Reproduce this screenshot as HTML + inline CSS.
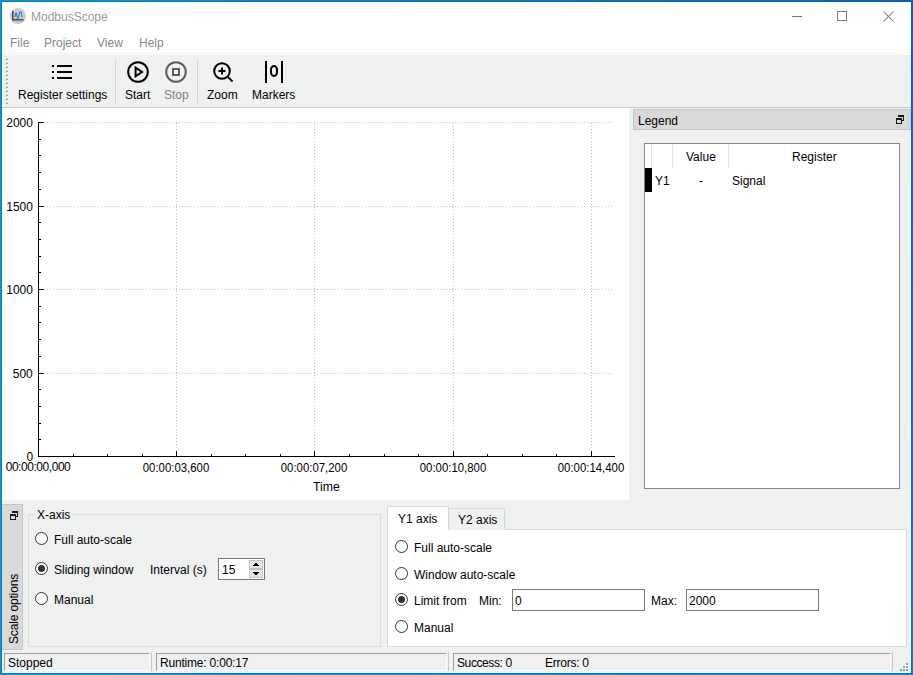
<!DOCTYPE html>
<html><head><meta charset="utf-8">
<style>
*{box-sizing:border-box;margin:0;padding:0}
html,body{width:913px;height:675px;overflow:hidden;background:#eff0f0}
body{position:relative;font-family:"Liberation Sans",sans-serif;font-size:12px;color:#000}
.a{position:absolute}
.t{position:absolute;white-space:nowrap;line-height:14px;height:14px}
.radio{width:13px;height:13px;border-radius:50%;border:1px solid #333;background:#fff}
.radio.on::after{content:"";position:absolute;left:2px;top:2px;width:7px;height:7px;border-radius:50%;background:#333}
.sunk{border-top:1px solid #a0a0a0;border-left:1px solid #a0a0a0;border-right:1px solid #fff;border-bottom:1px solid #fff}
</style></head><body>
<!-- window frame -->
<div class="a" style="left:0;top:0;width:913px;height:2px;background:linear-gradient(to right,#0099e0,#0080d0 50%,#0066c0)"></div>
<div class="a" style="left:1px;top:1px;width:911px;height:1px;background:linear-gradient(to right,#1a75ad,#1868a8 50%,#1a5a9a)"></div>
<div class="a" style="left:0;top:673px;width:913px;height:2px;background:linear-gradient(to right,#0099e0,#0a80d0)"></div>
<div class="a" style="left:1px;top:673px;width:911px;height:1px;background:linear-gradient(to right,#1a75ad,#1a6fa8)"></div>
<div class="a" style="left:0;top:0;width:2px;height:675px;background:#0099e0"></div>
<div class="a" style="left:1px;top:1px;width:1px;height:673px;background:#1a75ad"></div>
<div class="a" style="left:911px;top:0;width:2px;height:675px;background:linear-gradient(to bottom,#0066c0,#0075cc 50%,#0a80d0)"></div>
<div class="a" style="left:911px;top:1px;width:1px;height:673px;background:linear-gradient(to bottom,#1a5a9a,#1468aa 50%,#1a6fa8)"></div>
<div class="a" id="client" style="left:2px;top:2px;width:909px;height:671px;background:#eff0f0;overflow:hidden">
</div>

<!-- title bar -->
<div class="a" style="left:2px;top:2px;width:909px;height:30px;background:#fff"></div>
<!-- app icon -->
<svg class="a" style="left:10px;top:8px" width="16" height="16" viewBox="0 0 16 16">
  <circle cx="8" cy="8" r="8" fill="#cfcbc9"/>
  <path d="M2.8 3 V11.8 H13.5" fill="none" stroke="#4a4a4a" stroke-width="1.5"/>
  <path d="M3.5 12.8 H13.5" stroke="#9a9a9a" stroke-width="1"/>
  <path d="M5 9 C5.5 4 6.5 4 7 8 C7.5 11 8.5 11 9 7 C9.5 3 11 3 11.5 6 L12 9" fill="none" stroke="#1a7fd4" stroke-width="1.1"/>
</svg>
<div class="t" style="left:31px;top:10px;color:#999">ModbusScope</div>
<!-- window buttons -->
<div class="a" style="left:792px;top:16px;width:10px;height:1px;background:#777"></div>
<div class="a" style="left:837px;top:11px;width:10px;height:10px;border:1px solid #777"></div>
<svg class="a" style="left:883px;top:11px" width="11" height="11" viewBox="0 0 11 11"><path d="M0.5 0.5 L10.5 10.5 M10.5 0.5 L0.5 10.5" stroke="#777" stroke-width="1.05"/></svg>

<!-- menu bar -->
<div class="a" style="left:2px;top:32px;width:909px;height:21px;background:#fff"></div>
<div class="t" style="left:10px;top:36px;color:#888">File</div>
<div class="t" style="left:44px;top:36px;color:#888">Project</div>
<div class="t" style="left:97px;top:36px;color:#888">View</div>
<div class="t" style="left:139px;top:36px;color:#888">Help</div>
<div class="a" style="left:2px;top:53px;width:909px;height:1px;background:#f2f2f2"></div>
<div class="a" style="left:2px;top:54px;width:909px;height:1px;background:#fff"></div>

<!-- toolbar -->
<div class="a" style="left:2px;top:55px;width:909px;height:52px;background:#eff0f0"></div>
<div class="a" style="left:2px;top:107px;width:909px;height:1px;background:#c9c9c9"></div>

<!-- toolbar handle -->
<svg class="a" style="left:6px;top:58px" width="2" height="46" shape-rendering="crispEdges"><rect x="1" y="0" width="1" height="1" fill="#c4c4c4"/><rect x="0" y="1" width="1" height="1" fill="#8c8c8c"/><rect x="1" y="1" width="1" height="1" fill="#b0b0b0"/><rect x="1" y="4" width="1" height="1" fill="#c4c4c4"/><rect x="0" y="5" width="1" height="1" fill="#8c8c8c"/><rect x="1" y="5" width="1" height="1" fill="#b0b0b0"/><rect x="1" y="8" width="1" height="1" fill="#c4c4c4"/><rect x="0" y="9" width="1" height="1" fill="#8c8c8c"/><rect x="1" y="9" width="1" height="1" fill="#b0b0b0"/><rect x="1" y="12" width="1" height="1" fill="#c4c4c4"/><rect x="0" y="13" width="1" height="1" fill="#8c8c8c"/><rect x="1" y="13" width="1" height="1" fill="#b0b0b0"/><rect x="1" y="16" width="1" height="1" fill="#c4c4c4"/><rect x="0" y="17" width="1" height="1" fill="#8c8c8c"/><rect x="1" y="17" width="1" height="1" fill="#b0b0b0"/><rect x="1" y="20" width="1" height="1" fill="#c4c4c4"/><rect x="0" y="21" width="1" height="1" fill="#8c8c8c"/><rect x="1" y="21" width="1" height="1" fill="#b0b0b0"/><rect x="1" y="24" width="1" height="1" fill="#c4c4c4"/><rect x="0" y="25" width="1" height="1" fill="#8c8c8c"/><rect x="1" y="25" width="1" height="1" fill="#b0b0b0"/><rect x="1" y="28" width="1" height="1" fill="#c4c4c4"/><rect x="0" y="29" width="1" height="1" fill="#8c8c8c"/><rect x="1" y="29" width="1" height="1" fill="#b0b0b0"/><rect x="1" y="32" width="1" height="1" fill="#c4c4c4"/><rect x="0" y="33" width="1" height="1" fill="#8c8c8c"/><rect x="1" y="33" width="1" height="1" fill="#b0b0b0"/><rect x="1" y="36" width="1" height="1" fill="#c4c4c4"/><rect x="0" y="37" width="1" height="1" fill="#8c8c8c"/><rect x="1" y="37" width="1" height="1" fill="#b0b0b0"/><rect x="1" y="40" width="1" height="1" fill="#c4c4c4"/><rect x="0" y="41" width="1" height="1" fill="#8c8c8c"/><rect x="1" y="41" width="1" height="1" fill="#b0b0b0"/><rect x="1" y="44" width="1" height="1" fill="#c4c4c4"/><rect x="0" y="45" width="1" height="1" fill="#8c8c8c"/><rect x="1" y="45" width="1" height="1" fill="#b0b0b0"/></svg>
<!-- register settings icon -->
<div class="a" style="left:52px;top:65px;width:2px;height:2px;background:#000"></div>
<div class="a" style="left:52px;top:71px;width:2px;height:2px;background:#000"></div>
<div class="a" style="left:52px;top:77px;width:2px;height:2px;background:#000"></div>
<div class="a" style="left:57px;top:65px;width:15px;height:2px;background:#000"></div>
<div class="a" style="left:57px;top:71px;width:15px;height:2px;background:#000"></div>
<div class="a" style="left:57px;top:77px;width:15px;height:2px;background:#000"></div>
<div class="t" style="left:18px;top:88px">Register settings</div>
<div class="a" style="left:115px;top:59px;width:1px;height:44px;background:#d4d4d4"></div>
<!-- start -->
<svg class="a" style="left:126px;top:60px" width="24" height="24" viewBox="0 0 24 24">
 <circle cx="12" cy="12" r="9.8" fill="none" stroke="#000" stroke-width="2"/>
 <path d="M9.6 7.6 L16 12 L9.6 16.4 Z" fill="none" stroke="#000" stroke-width="2" stroke-linejoin="miter"/>
</svg>
<div class="t" style="left:125px;top:88px">Start</div>
<!-- stop -->
<svg class="a" style="left:164px;top:60px" width="24" height="24" viewBox="0 0 24 24">
 <circle cx="12" cy="12" r="9.8" fill="none" stroke="#5f5f5f" stroke-width="2"/>
 <rect x="9" y="9" width="6" height="6" fill="none" stroke="#5f5f5f" stroke-width="2"/>
</svg>
<div class="t" style="left:164px;top:88px;color:#838383">Stop</div>
<div class="a" style="left:197px;top:59px;width:1px;height:44px;background:#d4d4d4"></div>
<!-- zoom -->
<svg class="a" style="left:210px;top:59px" width="26" height="26" viewBox="0 0 26 26">
 <circle cx="12" cy="12" r="7.8" fill="none" stroke="#000" stroke-width="2"/>
 <path d="M17.6 17.6 L22.5 22.5" stroke="#000" stroke-width="2"/>
 <path d="M8.5 12 H15.5 M12 8.5 V15.5" stroke="#000" stroke-width="2"/>
</svg>
<div class="t" style="left:207px;top:88px">Zoom</div>
<!-- markers -->
<div class="a" style="left:265px;top:61px;width:2px;height:22px;background:#000"></div>
<div class="a" style="left:281px;top:61px;width:2px;height:22px;background:#000"></div>
<div class="a" style="left:270px;top:65px;width:8px;height:12px;border:2px solid #000;border-radius:4px/5px"></div>
<div class="t" style="left:252px;top:88px">Markers</div>
<!-- plot -->
<div class="a" style="left:2px;top:108px;width:627px;height:392px;background:#fff"></div>
<svg class="a" style="left:0;top:0" width="913" height="675" shape-rendering="crispEdges">
<line x1="47" y1="122.5" x2="613" y2="122.5" stroke="#c0c0c0" stroke-dasharray="1 2"/>
<line x1="47" y1="206.5" x2="613" y2="206.5" stroke="#c0c0c0" stroke-dasharray="1 2"/>
<line x1="47" y1="289.5" x2="613" y2="289.5" stroke="#c0c0c0" stroke-dasharray="1 2"/>
<line x1="47" y1="373.5" x2="613" y2="373.5" stroke="#c0c0c0" stroke-dasharray="1 2"/>
<line x1="176.5" y1="448" x2="176.5" y2="121" stroke="#c0c0c0" stroke-dasharray="1 2"/>
<line x1="314.5" y1="448" x2="314.5" y2="121" stroke="#c0c0c0" stroke-dasharray="1 2"/>
<line x1="453.5" y1="448" x2="453.5" y2="121" stroke="#c0c0c0" stroke-dasharray="1 2"/>
<line x1="591.5" y1="448" x2="591.5" y2="121" stroke="#c0c0c0" stroke-dasharray="1 2"/>
<rect x="38" y="122" width="1" height="335" fill="#000"/>
<rect x="38" y="456" width="577" height="1" fill="#000"/>
<rect x="38" y="122" width="6" height="1" fill="#000"/>
<rect x="38" y="206" width="6" height="1" fill="#000"/>
<rect x="38" y="289" width="6" height="1" fill="#000"/>
<rect x="38" y="373" width="6" height="1" fill="#000"/>
<rect x="38" y="439" width="3" height="1" fill="#000"/>
<rect x="38" y="423" width="3" height="1" fill="#000"/>
<rect x="38" y="406" width="3" height="1" fill="#000"/>
<rect x="38" y="389" width="3" height="1" fill="#000"/>
<rect x="38" y="356" width="3" height="1" fill="#000"/>
<rect x="38" y="339" width="3" height="1" fill="#000"/>
<rect x="38" y="322" width="3" height="1" fill="#000"/>
<rect x="38" y="306" width="3" height="1" fill="#000"/>
<rect x="38" y="272" width="3" height="1" fill="#000"/>
<rect x="38" y="256" width="3" height="1" fill="#000"/>
<rect x="38" y="239" width="3" height="1" fill="#000"/>
<rect x="38" y="222" width="3" height="1" fill="#000"/>
<rect x="38" y="189" width="3" height="1" fill="#000"/>
<rect x="38" y="172" width="3" height="1" fill="#000"/>
<rect x="38" y="155" width="3" height="1" fill="#000"/>
<rect x="38" y="139" width="3" height="1" fill="#000"/>
<rect x="176" y="451" width="1" height="6" fill="#000"/>
<rect x="314" y="451" width="1" height="6" fill="#000"/>
<rect x="453" y="451" width="1" height="6" fill="#000"/>
<rect x="591" y="451" width="1" height="6" fill="#000"/>
<rect x="73" y="454" width="1" height="2" fill="#000"/>
<rect x="107" y="454" width="1" height="2" fill="#000"/>
<rect x="142" y="454" width="1" height="2" fill="#000"/>
<rect x="211" y="454" width="1" height="2" fill="#000"/>
<rect x="245" y="454" width="1" height="2" fill="#000"/>
<rect x="280" y="454" width="1" height="2" fill="#000"/>
<rect x="349" y="454" width="1" height="2" fill="#000"/>
<rect x="384" y="454" width="1" height="2" fill="#000"/>
<rect x="418" y="454" width="1" height="2" fill="#000"/>
<rect x="487" y="454" width="1" height="2" fill="#000"/>
<rect x="522" y="454" width="1" height="2" fill="#000"/>
<rect x="556" y="454" width="1" height="2" fill="#000"/>
</svg>
<div class="t" style="right:880px;top:115px;font-size:13px;line-height:16px;height:16px;transform:scaleX(0.92);transform-origin:right center">2000</div>
<div class="t" style="right:880px;top:199px;font-size:13px;line-height:16px;height:16px;transform:scaleX(0.92);transform-origin:right center">1500</div>
<div class="t" style="right:880px;top:282px;font-size:13px;line-height:16px;height:16px;transform:scaleX(0.92);transform-origin:right center">1000</div>
<div class="t" style="right:880px;top:366px;font-size:13px;line-height:16px;height:16px;transform:scaleX(0.92);transform-origin:right center">500</div>
<div class="t" style="right:880px;top:449px;font-size:13px;line-height:16px;height:16px;transform:scaleX(0.92);transform-origin:right center">0</div>
<div class="t" style="left:-2px;width:80px;text-align:center;top:460px;letter-spacing:-0.45px">00:00:00,000</div>
<div class="t" style="left:136px;width:80px;text-align:center;top:460px;font-size:13px;line-height:16px;height:16px;transform:scaleX(0.875)">00:00:03,600</div>
<div class="t" style="left:274px;width:80px;text-align:center;top:460px;font-size:13px;line-height:16px;height:16px;transform:scaleX(0.875)">00:00:07,200</div>
<div class="t" style="left:413px;width:80px;text-align:center;top:460px;font-size:13px;line-height:16px;height:16px;transform:scaleX(0.875)">00:00:10,800</div>
<div class="t" style="left:551px;width:80px;text-align:center;top:460px;font-size:13px;line-height:16px;height:16px;transform:scaleX(0.875)">00:00:14,400</div>
<div class="t" style="left:313px;top:479px;font-size:13px;line-height:16px;height:16px;transform:scaleX(0.94);transform-origin:left center">Time</div>

<!-- legend dock -->
<div class="a" style="left:633px;top:109px;width:278px;height:21px;background:#d9d9d9;border:1px solid #c6c6c6"></div>
<div class="t" style="left:638px;top:114px">Legend</div>
<svg class="a" style="left:895px;top:114px" width="10" height="11" viewBox="0 0 10 11" shape-rendering="crispEdges">
 <path d="M3.5 1.5 H8.5 V6.5 H6.5" fill="none" stroke="#1a1a1a"/>
 <rect x="3" y="1" width="6" height="2" fill="#1a1a1a"/>
 <rect x="1.5" y="4.5" width="5" height="5" fill="none" stroke="#1a1a1a"/>
 <rect x="1" y="4" width="6" height="2" fill="#1a1a1a"/>
</svg>
<div class="a" style="left:644px;top:143px;width:256px;height:346px;background:#fff;border:1px solid #828790"></div>
<div class="a" style="left:651px;top:144px;width:1px;height:24px;background:#e5e5e5"></div>
<div class="a" style="left:672px;top:144px;width:1px;height:24px;background:#e5e5e5"></div>
<div class="a" style="left:728px;top:144px;width:1px;height:24px;background:#e5e5e5"></div>
<div class="t" style="left:686px;top:150px">Value</div>
<div class="t" style="left:792px;top:150px">Register</div>
<div class="a" style="left:645px;top:168px;width:7px;height:24px;background:#000"></div>
<div class="t" style="left:655px;top:174px">Y1</div>
<div class="t" style="left:699px;top:174px">-</div>
<div class="t" style="left:732px;top:174px">Signal</div>

<!-- bottom dock vertical title -->
<div class="a" style="left:2px;top:504px;width:21px;height:146px;background:#d9d9d9;border:1px solid #c6c6c6;border-left:none"></div>
<svg class="a" style="left:9px;top:510px" width="10" height="11" viewBox="0 0 10 11" shape-rendering="crispEdges">
 <path d="M3.5 1.5 H8.5 V6.5 H6.5" fill="none" stroke="#1a1a1a"/>
 <rect x="3" y="1" width="6" height="2" fill="#1a1a1a"/>
 <rect x="1.5" y="4.5" width="5" height="5" fill="none" stroke="#1a1a1a"/>
 <rect x="1" y="4" width="6" height="2" fill="#1a1a1a"/>
</svg>
<div class="t" style="left:-26px;top:602px;width:80px;text-align:center;transform:rotate(-90deg);letter-spacing:-0.15px">Scale options</div>
<!-- X-axis group -->
<div class="a" style="left:28px;top:514px;width:353px;height:133px;border:1px solid #dcdcdc"></div>
<div class="t" style="left:35px;top:508px;padding:0 2px;background:#eff0f0">X-axis</div>
<div class="radio a" style="left:35px;top:532px"></div>
<div class="t" style="left:54px;top:533px">Full auto-scale</div>
<div class="radio on a" style="left:35px;top:562px"></div>
<div class="t" style="left:54px;top:563px">Sliding window</div>
<div class="t" style="left:150px;top:563px">Interval (s)</div>
<div class="a" style="left:218px;top:558px;width:47px;height:22px;background:#fff;border:1px solid #7a7a7a"></div>
<div class="t" style="left:222px;top:563px">15</div>
<div class="a" style="left:249px;top:560px;width:14px;height:9px;background:#e6e6e6;border:1px solid #c4c4c4"></div>
<div class="a" style="left:249px;top:569px;width:14px;height:9px;background:#e6e6e6;border:1px solid #c4c4c4"></div>
<svg class="a" style="left:249px;top:560px" width="14" height="18" shape-rendering="crispEdges">
 <path d="M4 6 H10 V5 H9 V4 H8 V3 H6 V4 H5 V5 H4 Z" fill="#000"/>
 <path d="M4 12 H10 V13 H9 V14 H8 V15 H6 V14 H5 V13 H4 Z" fill="#000"/>
</svg>
<div class="radio a" style="left:35px;top:592px"></div>
<div class="t" style="left:54px;top:593px">Manual</div>

<!-- tabs -->
<div class="a" style="left:387px;top:529px;width:520px;height:118px;background:#fff;border:1px solid #d9d9d9"></div>
<div class="a" style="left:448px;top:508px;width:57px;height:22px;background:#eff0f0;border:1px solid #d9d9d9;border-bottom:none"></div>
<div class="a" style="left:387px;top:506px;width:62px;height:24px;background:#fff;border:1px solid #d9d9d9;border-bottom:none"></div>
<div class="t" style="left:398px;top:512px">Y1 axis</div>
<div class="t" style="left:458px;top:513px">Y2 axis</div>
<div class="radio a" style="left:395px;top:540px"></div>
<div class="t" style="left:414px;top:541px">Full auto-scale</div>
<div class="radio a" style="left:395px;top:567px"></div>
<div class="t" style="left:414px;top:568px">Window auto-scale</div>
<div class="radio on a" style="left:395px;top:593px"></div>
<div class="t" style="left:414px;top:594px">Limit from</div>
<div class="t" style="left:479px;top:594px">Min:</div>
<div class="a" style="left:512px;top:589px;width:133px;height:22px;background:#fff;border:1px solid #7a7a7a"></div>
<div class="t" style="left:515px;top:594px">0</div>
<div class="t" style="left:651px;top:594px">Max:</div>
<div class="a" style="left:686px;top:589px;width:133px;height:22px;background:#fff;border:1px solid #7a7a7a"></div>
<div class="t" style="left:689px;top:594px">2000</div>
<div class="radio a" style="left:395px;top:620px"></div>
<div class="t" style="left:414px;top:621px">Manual</div>

<!-- status bar -->
<div class="a sunk" style="left:4px;top:653px;width:146px;height:18px"></div>
<div class="a" style="left:151px;top:652px;width:1px;height:19px;background:#c9c9c9"></div>
<div class="t" style="left:8px;top:656px">Stopped</div>
<div class="a sunk" style="left:156px;top:653px;width:291px;height:18px"></div>
<div class="a" style="left:448px;top:652px;width:1px;height:19px;background:#c9c9c9"></div>
<div class="t" style="left:160px;top:656px;letter-spacing:-0.2px">Runtime: 0:00:17</div>
<div class="a sunk" style="left:453px;top:653px;width:438px;height:18px"></div>
<div class="a" style="left:892px;top:652px;width:1px;height:19px;background:#c9c9c9"></div>
<div class="t" style="left:457px;top:656px;letter-spacing:-0.4px">Success: 0</div>
<div class="t" style="left:545px;top:656px;letter-spacing:-0.25px">Errors: 0</div>
<svg class="a" style="left:899px;top:662px" width="10" height="10" shape-rendering="crispEdges">
 <rect x="7" y="1" width="2" height="2" fill="#a0a0a8"/>
 <rect x="4" y="4" width="2" height="2" fill="#a0a0a8"/><rect x="7" y="4" width="2" height="2" fill="#a0a0a8"/>
 <rect x="1" y="7" width="2" height="2" fill="#a0a0a8"/><rect x="4" y="7" width="2" height="2" fill="#a0a0a8"/><rect x="7" y="7" width="2" height="2" fill="#a0a0a8"/>
</svg>
<div class="a" style="left:910px;top:130px;width:1px;height:543px;background:#fdfbf9"></div>
<div class="a" style="left:2px;top:672px;width:909px;height:1px;background:#fdfbf9"></div>
<div class="a" style="left:2px;top:55px;width:1px;height:52px;background:#fdfbf9"></div>
</body></html>
